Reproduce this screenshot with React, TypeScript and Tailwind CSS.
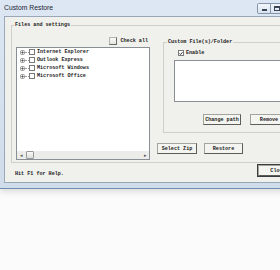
import React from 'react';

const mono = "font-['Liberation_Mono',monospace] font-bold text-[5.1px] leading-[6px] text-[#1a1a1a]";

function Box({ checked }: { checked?: boolean }) {
    return (
        <div className="w-[6px] h-[6px] shrink-0 border border-[#7a7a7a] bg-white flex items-center justify-center">
            {checked && (
                <svg width="5" height="5" viewBox="0 0 5 5">
                    <path d="M0.6 2.4 L2 3.8 L4.4 0.8" fill="none" stroke="#202020" strokeWidth="1.1" />
                </svg>
            )}
        </div>
    );
}

function Btn({ label, w, strong }: { label: string; w: string; strong?: boolean }) {
    return (
        <div
            className={`${w} h-[11px] shrink-0 flex items-center justify-center bg-[#f4f4f0] border border-[#a4a49e] border-r-[#5c5c58] border-b-[#5c5c58] ${strong ? 'outline outline-1 outline-[#3c3c3c]' : ''} ${mono}`}
        >
            {label}
        </div>
    );
}

const items = ['Internet Explorer', 'Outlook Express', 'Microsoft Windows', 'Microsoft Office'];

export default function App() {
    return (
        <div className="w-[280px] h-[270px] overflow-hidden bg-[#fbfbfb]">
            <div className="w-[310px] flex flex-col bg-linear-to-b from-[#dce7f3] to-[#d0dcea] border-b border-[#6f8db0] shadow-[0_3px_6px_rgba(0,0,0,0.12)]">
                {/* title bar */}
                <div className="h-[16px] flex items-center pl-[4px] pr-[3px]">
                    <span className="font-['Liberation_Sans',sans-serif] text-[6.8px] text-[#1b2533]">Custom Restore</span>
                    <div className="ml-auto flex h-[11px] rounded-[2px] border border-[#8596ab] overflow-hidden">
                        <div className="w-[13px] bg-linear-to-b from-[#f3f7fb] to-[#d8e2ee] border-r border-[#8596ab] flex items-end justify-center pb-[2px]">
                            <div className="w-[5px] h-[2px] bg-[#3a4656]" />
                        </div>
                        <div className="w-[13px] bg-linear-to-b from-[#f3f7fb] to-[#d8e2ee] border-r border-[#8596ab] flex items-center justify-center">
                            <div className="w-[6px] h-[5px] border border-[#3a4656] border-t-2" />
                        </div>
                        <div className="w-[22px] bg-linear-to-b from-[#e8b3a8] to-[#c7584a]" />
                    </div>
                </div>

                {/* body */}
                <div className="mx-[4px] mb-[5px] h-[167px] border border-[#9aa7b8] bg-[#f0f0ec] flex flex-col overflow-hidden">
                    <fieldset className="ml-[6px] mt-[5px] w-[300px] h-[141px] border border-[#cfcfc8] flex shrink-0">
                        <legend className={`ml-[2px] px-[1px] ${mono}`}>Files and settings</legend>
                        <div className="flex">
                            {/* left column */}
                            <div className="ml-[4px] w-[134px] flex flex-col">
                                <div className="mt-[9px] h-[8px] flex items-center justify-end gap-[3px] pr-[2px]">
                                    <div className="w-[8px] h-[8px] border border-[#b4b4ae] border-r-[#6a6a66] border-b-[#6a6a66] bg-linear-to-b from-[#fafaf8] to-[#e4e4de]" />
                                    <span className={mono}>Check all</span>
                                </div>
                                <div className="mt-[2px] h-[113px] border border-[#8a8f96] bg-white flex flex-col">
                                    <div className="flex-1 flex flex-col">
                                        {items.map((t) => (
                                            <div key={t} className="h-[8px] flex items-center pl-[3px]">
                                                <svg width="5" height="5" viewBox="0 0 5 5" className="shrink-0">
                                                    <rect x="0.5" y="0.5" width="4" height="4" rx="1.2" fill="#f4f4f4" stroke="#9c9c9c" />
                                                    <path d="M1.3 2.5 H3.7 M2.5 1.3 V3.7" stroke="#555" strokeWidth="0.8" />
                                                </svg>
                                                <div className="w-[4px] border-t border-dotted border-[#a0a0a0]" />
                                                <Box />
                                                <span className={`ml-[2px] ${mono}`}>{t}</span>
                                            </div>
                                        ))}
                                    </div>
                                    <div className="h-[8px] flex bg-[#ececea]">
                                        <div className="w-[8px] flex items-center justify-center text-[5px] leading-none text-[#555]">◂</div>
                                        <div className="ml-[1px] w-[8px] h-[8px] rounded-[1px] border border-[#9a9a9a] bg-linear-to-b from-[#fbfbfb] to-[#dcdcdc]" />
                                        <div className="flex-1" />
                                        <div className="w-[8px] flex items-center justify-center text-[5px] leading-none text-[#555]">▸</div>
                                    </div>
                                </div>
                            </div>

                            {/* right column */}
                            <div className="ml-[7px] flex flex-col">
                                <fieldset className="ml-[6px] mt-[11px] w-[200px] h-[94px] border border-[#cfcfc8] shrink-0">
                                    <legend className={`ml-[3px] px-[1px] ${mono}`}>Custom File(s)/Folder</legend>
                                    <div className="flex flex-col">
                                        <div className="mt-[5px] ml-[14px] h-[6px] flex items-center gap-[2px]">
                                            <Box checked />
                                            <span className={mono}>Enable</span>
                                        </div>
                                        <div className="mt-[4px] ml-[10px] w-[200px] h-[42px] border border-[#8a8f96] bg-white" />
                                        <div className="mt-[12px] ml-[39px] flex gap-[9px]">
                                            <Btn label="Change path" w="w-[38px]" />
                                            <Btn label="Remove" w="w-[38px]" />
                                        </div>
                                    </div>
                                </fieldset>
                                <div className="mt-[10px] flex gap-[7px]">
                                    <Btn label="Select Zip" w="w-[40px]" />
                                    <Btn label="Restore" w="w-[39px]" />
                                </div>
                            </div>
                        </div>
                    </fieldset>

                    {/* status row */}
                    <div className="mt-[2px] flex items-start">
                        <div className={`ml-[10px] mt-[6px] w-[243px] ${mono}`}>Hit F1 for Help.</div>
                        <Btn label="Close" w="w-[40px]" strong />
                    </div>
                </div>
            </div>
        </div>
    );
}
